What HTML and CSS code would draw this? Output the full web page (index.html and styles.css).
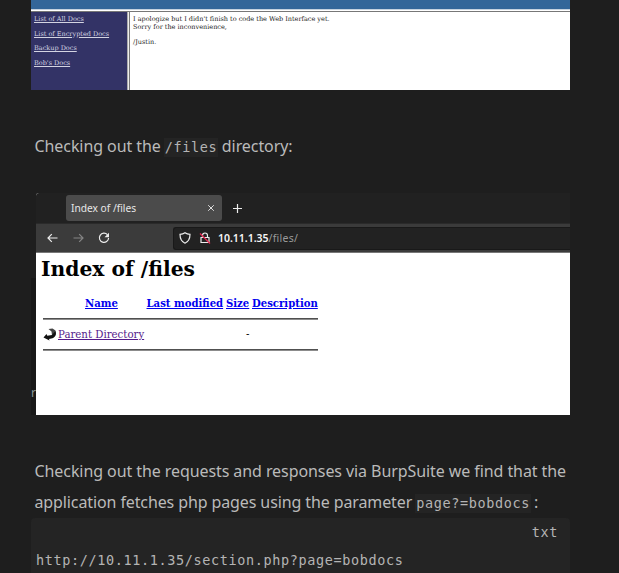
FILE: index.html
```html
<!DOCTYPE html>
<html lang="en">
<head>
<meta charset="utf-8">
<title>Notes</title>
<link rel="stylesheet" href="styles.css">
</head>
<body>
<main class="note">
  <section class="docs">
    <div class="docs-banner"></div>
    <div class="docs-body">
      <nav class="docs-nav">
        <a>List of All Docs</a>
        <a>List of Encrypted Docs</a>
        <a>Backup Docs</a>
        <a>Bob's Docs</a>
      </nav>
      <div class="docs-text">
        <p>I apologize but I didn't finish to code the Web Interface yet.<br>Sorry for the inconvenience,</p>
        <p>/Justin.</p>
      </div>
    </div>
  </section>

  <p class="para first">Checking out the <code>/files</code> directory:</p>

  <section class="shot">
    <div class="edge"><span>r</span></div>
    <div class="browser">
      <div class="tabs">
        <div class="tab"><span>Index of /files</span>
          <svg width="8" height="8" viewBox="0 0 8 8"><path d="M1.2 1.2l5.6 5.6M6.8 1.2L1.2 6.8"/></svg>
        </div>
        <svg class="plus" width="9" height="9" viewBox="0 0 9 9"><path d="M4.500 0v9M0 4.500h9"/></svg>
      </div>
      <div class="toolbar">
        <svg class="back" width="11" height="10" viewBox="0 0 11 10"><path d="M10.500 5H1M4.800 1.200L1 5l3.800 3.800"/></svg>
        <svg class="fwd" width="11" height="10" viewBox="0 0 11 10"><path d="M.5 5H10M6.200 1.200L10 5 6.200 8.800"/></svg>
        <svg class="reload" width="12" height="12" viewBox="0 0 12 12"><path d="M9.4 2.7A4.6 4.6 0 1 0 10.6 6"/><path class="tip" d="M11 .8v4.500H6.500z"/></svg>
        <div class="url">
          <svg class="shield" width="12" height="12" viewBox="0 0 12 12"><path d="M6 .8C4.500 1.900 2.800 2.300 1 2.300c0 4 .8 7.100 5 8.900 4.200-1.800 5-4.900 5-8.900C9.200 2.300 7.500 1.900 6 .8z"/></svg>
          <svg class="lock" width="12" height="12" viewBox="0 0 12 12"><path d="M3.500 5.500V3.500a2.500 2.500 0 0 1 5 0v2M2 5.500h8v5H2z"/><path class="slash" d="M1 1.500l10 10"/></svg>
          <span class="addr"><b>10.11.1.35</b>/files/</span>
        </div>
      </div>
      <div class="page">
        <h1>Index of /files</h1>
        <div class="head"><a class="c-name">Name</a><a class="c-mod">Last modified</a><a class="c-size">Size</a><a class="c-desc">Description</a></div>
        <hr>
        <div class="row">
          <svg width="14" height="13" viewBox="0 0 14 13"><path class="shade" d="M5.500 1l4-.5 3 2v4L9 7.500 8.500 3.500z"/><path d="M12.500 3c1.200 3.500 0 6-3 7.300L6 11l.5 1.500L.5 9.500 3.500 6l.8 1.700 4.700-.7z"/></svg>
          <a>Parent Directory</a><span>-</span>
        </div>
        <hr>
      </div>
    </div>
  </section>

  <p class="para second"><span class="wide">Checking out the requests and responses via BurpSuite we find that the</span><br><span class="narrow">application fetches php pages using the parameter </span><code>page?=bobdocs</code><span class="colon">:</span></p>

  <div class="block">
    <div class="lang">txt</div>
    <pre>http://10.11.1.35/section.php?page=bobdocs</pre>
  </div>
</main>
</body>
</html>
```
FILE: styles.css
```css
* { box-sizing: border-box; }
body { margin: 0; background: #1e1e1e; height: 573px; overflow: hidden; font-family: "Noto Sans", sans-serif; }
p { margin: 0; }
svg { display: block; flex: none; fill: none; stroke: #ededed; stroke-width: 1.2; }
.note { margin-left: 31px; width: 539px; }

.docs { height: 90px; background: #fff; font-family: "DejaVu Serif", serif; font-size: 6.5px; }
.docs-banner { height: 12px; background: linear-gradient(#336699 9px, #c5d2df 9px 10px, #fff 10px 11px, #777 11px); }
.docs-body { display: flex; height: 78px; }
.docs-nav { width: 99px; padding: 3px 0 0 3px; background: linear-gradient(90deg, #333366 96px, #aaa 96px 97px, #eee 97px 98px, #777 98px); }
.docs-nav a { display: block; width: max-content; height: 14.7px; line-height: 9px; color: #d4d4e2; text-decoration: underline; white-space: nowrap; }
.docs-text { padding: 3px 0 0 3px; line-height: 8.4px; color: #222; white-space: nowrap; }
.docs-text p { margin-bottom: 6.2px; }

.para { color: #bababa; font-size: 16px; line-height: 31px; letter-spacing: -.08px; white-space: nowrap; }
.first { height: 31px; margin: 41px 0 31px 3.5px; }
code { display: inline-block; height: 19px; line-height: 19px; background: #242424; padding: 0 1px; margin-left: -1px; }
.first code { margin-right: -.5px; }
.narrow { letter-spacing: -.11px; }
code, pre, .lang { font-family: "DejaVu Sans Mono", monospace; font-size: 13.5px; letter-spacing: .62px; color: #b4b4b4; }

.shot { display: flex; height: 222px; }
.edge { width: 5px; padding-top: 192px; background: linear-gradient(#1e1e1e 85px, #181818 85px); overflow: hidden; color: #8a9999; font-size: 12px; line-height: 16px; }
.browser { width: 534px; background: #fff; border-radius: 3px 0 0; }
.tabs { display: flex; height: 30px; padding: 2px 0 0 30px; background: #212121; border-radius: 3px 0 0; }
.tab { display: flex; align-items: center; justify-content: space-between; width: 156px; height: 26px; padding: 0 7px 0 5px; background: #4b4b4b; border-radius: 3px; color: #e7e7e7; font-size: 10.2px; }
.tab svg { stroke: #ddd; stroke-width: 1; }
.plus { margin: 9px 0 0 11px; }
.toolbar { display: flex; align-items: center; height: 30px; padding-left: 11px; background: #3b3b3b; border-top: 1px solid #2a2a2a; border-bottom: 1px solid #777; }
.fwd { margin-left: 15px; stroke: #858585; }
.reload { margin-left: 14px; }
.tip { fill: #ededed; stroke: none; }
.url { display: flex; align-items: center; margin-left: 63px; width: 397px; height: 23px; padding-left: 5px; background: #222; border: 1px solid #191919; border-right: 0; border-radius: 3px 0 0 3px; }
.lock { margin-left: 8px; }
.slash { stroke: #e22850; }
.addr { margin-left: 7px; font-size: 10.5px; letter-spacing: .25px; color: #9b9b9b; }
.addr b { color: #f5f5f5; font-weight: 600; letter-spacing: -.02px; }
.page { height: 162px; padding: 3px 0 0 5px; font-family: "DejaVu Serif", serif; font-size: 10.2px; color: #000; }
h1 { margin: 0; height: 26px; line-height: 26px; font-size: 20.3px; }
.head { display: flex; height: 36px; line-height: 44px; font-size: 10.1px; font-weight: bold; color: #0000ee; white-space: nowrap; }
.c-name { width: 61.5px; margin-left: 44px; }
.c-mod { width: 79.5px; }
.c-size { width: 26px; }
.head a, .row a { text-decoration: underline; }
hr { width: 275px; height: 2px; margin: 0 0 0 2px; border: 0; background: linear-gradient(#505050 50%, #8c8c8c 50%); }
.row { display: flex; align-items: center; height: 29px; padding-left: 2px; line-height: 29px; }
.row a { width: 188px; margin-left: 1px; color: #551a8b; }
.row svg { fill: #111; stroke: none; }
.row .shade { fill: #444; }

.second { height: 62px; margin: 41px 0 0 3.5px; }
.colon { margin-left: 3px; }
.block { height: 55px; background: #242424; border-radius: 4px 4px 0 0; padding: 5px 12px 0 5px; }
.lang { height: 19px; line-height: 19px; text-align: right; }
pre { margin: 8px 0 0; line-height: 20px; }
```
